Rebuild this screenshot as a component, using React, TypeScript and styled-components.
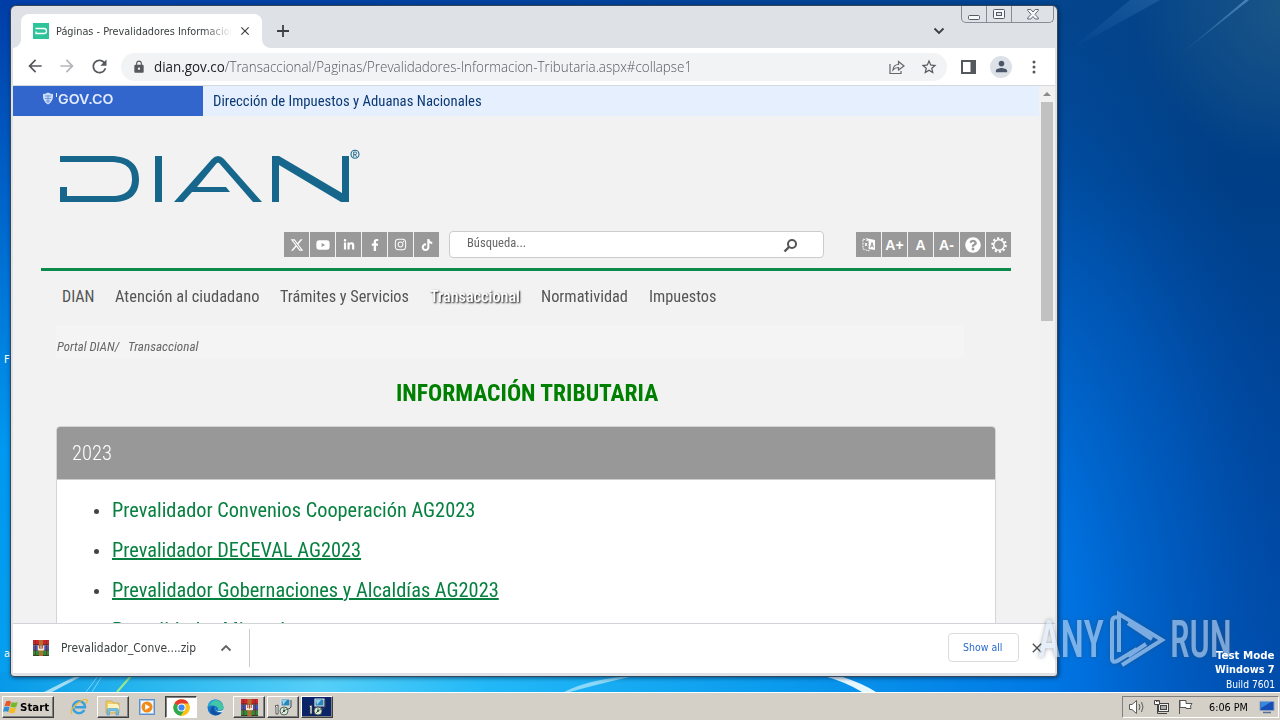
import { ReactNode, useLayoutEffect, useRef, useState } from "react";
import { FaFacebookF, FaInstagram, FaLinkedinIn, FaQuestionCircle, FaTiktok, FaYoutube } from "react-icons/fa";
import { FaXTwitter } from "react-icons/fa6";
import { MdArrowBack, MdArrowForward, MdClose, MdLock, MdPerson, MdRefresh, MdStarBorder } from "react-icons/md";
import styled, { createGlobalStyle, css } from "styled-components";

const GlobalStyle = createGlobalStyle`
  * {
    box-sizing: border-box;
  }

  body {
    margin: 0;
    width: 1280px;
    height: 720px;
    overflow: hidden;
    font-family: "DejaVu Sans Condensed", "DejaVu Sans", sans-serif;
    font-size: 11px;
  }
`;

const Desktop = styled.div`
  position: relative;
  display: flex;
  flex-direction: column;
  width: 1280px;
  height: 720px;
  overflow: hidden;
`;

const Wallpaper = styled.svg`
  position: absolute;
  inset: 0;
`;

const Stage = styled.main`
  position: relative;
  height: 692px;
  padding: 5px 0 0 10px;
`;

/* ---------- text ---------- */

const FitBox = styled.span<{ $width: number }>`
  display: block;
  flex: none;
  width: ${({ $width }) => $width}px;
  white-space: nowrap;
`;

const FitInner = styled.span`
  display: inline-block;
  transform-origin: left center;
`;

// Squeezes its text to a fixed advance width.
const Fit = ({ width, children }: { width: number; children: ReactNode }) => {
  const ref = useRef<HTMLSpanElement>(null);
  const [scale, setScale] = useState<number>(1);

  useLayoutEffect(() => {
    if (ref.current) setScale(width / ref.current.offsetWidth);
  }, [width]);

  return (
    <FitBox $width={width}>
      <FitInner ref={ref} style={{ transform: `scaleX(${scale})` }}>
        {children}
      </FitInner>
    </FitBox>
  );
};

/* ---------- browser window ---------- */

const BrowserWindow = styled.section`
  position: relative;
  display: flex;
  flex-direction: column;
  width: 1048px;
  height: 672px;
  padding: 0 2px 3px;
  background: #dee1e6;
  border: 1px solid #33475c;
  border-radius: 6px 6px 4px 4px;
  box-shadow: 1px 1px 4px rgba(0, 20, 50, 0.6);
`;

const TabStrip = styled.div`
  display: flex;
  align-items: flex-end;
  height: 42px;
`;

const Tab = styled.div`
  position: relative;
  display: flex;
  align-items: center;
  width: 241px;
  height: 34px;
  margin-left: 8px;
  padding: 0 10px 0 12px;
  background: #fff;
  border-radius: 8px 8px 0 0;
  color: #3c4043;

  &::before,
  &::after {
    content: "";
    position: absolute;
    bottom: 0;
    width: 8px;
    height: 8px;
  }

  &::before {
    left: -8px;
    background: radial-gradient(circle at 0 0, transparent 7.5px, #fff 8px);
  }

  &::after {
    right: -8px;
    background: radial-gradient(circle at 100% 0, transparent 7.5px, #fff 8px);
  }
`;

const TabTitle = styled.div`
  flex: none;
  width: 175px;
  margin: 0 7px;
  overflow: hidden;
  mask-image: linear-gradient(90deg, #000 148px, transparent 176px);
`;

const NewTab = styled.svg`
  margin: 0 0 11px 15px;
`;

const TabSearch = styled.svg`
  margin: 0 0 12px auto;
`;

const WindowControls = styled.div`
  display: flex;
  align-self: flex-start;
  width: 93px;
  height: 17px;
  margin: 0 1px 0 16px;
  border: 1px solid #868b94;
  border-top: 0;
  border-radius: 0 0 5px 5px;
`;

const ControlButton = styled.div<{ $width: number }>`
  display: grid;
  place-items: center;
  width: ${({ $width }) => $width}px;

  & + & {
    border-left: 1px solid #868b94;
  }
`;

const Toolbar = styled.div`
  display: flex;
  align-items: center;
  height: 38px;
  padding: 0 12px;
  background: #fff;
  border-bottom: 1px solid #d5d8dc;
  color: #55585c;
`;

const NavButtons = styled.div`
  display: flex;
  gap: 12px;
  width: 96px;
`;

const FadedIcon = styled.span`
  display: flex;
  color: #b4b6b9;
`;

const Omnibox = styled.div`
  display: flex;
  align-items: center;
  width: 826px;
  height: 28px;
  padding: 0 9px 0 11px;
  background: #f1f3f4;
  border-radius: 14px;
`;

const Address = styled.div`
  margin: 0 auto 0 8px;
  font-family: "Open Sans", "Noto Sans", sans-serif;
  font-size: 14px;
  font-weight: 300;
  line-height: 20px;
  color: #55595e;

  b {
    font-weight: 400;
    color: #202124;
  }
`;

const ShareIcon = styled.svg`
  margin-right: 15px;
`;

const ToolbarEnd = styled.div`
  display: flex;
  align-items: center;
  margin-left: 14px;
`;

const Avatar = styled.div`
  display: grid;
  place-items: center;
  width: 22px;
  height: 22px;
  margin: 0 20px 0 14px;
  border-radius: 50%;
  background: #dce1e7;
  color: #4c5668;
`;

/* ---------- web page ---------- */

const Viewport = styled.div`
  display: flex;
  height: 537px;
  overflow: hidden;
  font-family: "Roboto Condensed", Roboto, sans-serif;
  font-stretch: 75%;
`;

const Page = styled.div`
  width: 1026px;
  height: 537px;
  overflow: hidden;
  background: #f2f2f2;
`;

const Scrollbar = styled.div`
  display: flex;
  flex-direction: column;
  align-items: center;
  width: 16px;
  background: #f1f1f1;

  svg {
    margin: 6px 0;
  }
`;

const ScrollThumb = styled.div`
  width: 12px;
  height: 219px;
  background: #c1c1c1;
`;

const GovBar = styled.div`
  display: flex;
  height: 30px;
  background: #e6effd;
`;

const GovBrand = styled.div`
  display: flex;
  align-items: center;
  width: 190px;
  height: 30px;
  padding: 0 0 4px 29px;
  background: #3366cc;
  color: #e4edff;
  font-family: Inter, sans-serif;
  font-size: 13px;
  font-weight: 600;
  font-stretch: normal;
`;

const GovName = styled.div`
  padding-left: 10px;
  font-size: 15px;
  line-height: 30px;
  color: #0b3a75;
`;

const Logo = styled.svg`
  display: block;
  margin: 30px 0 0 44px;
`;

const Tools = styled.div`
  display: flex;
  height: 27px;
  margin: 25px 28px 0 271px;
`;

const TileRow = styled.div`
  display: flex;
  gap: 1px;
  margin-top: 1px;
`;

const Tile = styled.div`
  display: grid;
  place-items: center;
  width: 25px;
  height: 25px;
  background: #999;
  color: #fff;
  font-family: "Liberation Sans", sans-serif;
  font-size: 14px;
  font-weight: 700;
  font-stretch: normal;
`;

const SearchBox = styled.div`
  display: flex;
  justify-content: space-between;
  width: 375px;
  height: 27px;
  margin: 0 32px 0 10px;
  padding: 2px 25px 0 17px;
  background: #fff;
  border: 1px solid #ccc;
  border-radius: 4px;
  font-size: 13px;
  line-height: 17px;
  color: #666;
`;

const GreenRule = styled.div`
  height: 3px;
  margin: 10px 28px 0;
  background: #0b8a4b;
`;

const Menu = styled.nav`
  display: flex;
  gap: 21px;
  padding: 15px 0 0 49px;
  font-size: 16px;
  line-height: 22px;
`;

const MenuItem = styled.div<{ $active?: boolean }>`
  color: #555;

  ${({ $active }) =>
    $active &&
    css`
      color: #fff;
      font-weight: 500;
      text-shadow: 1px 1px 2px #000;
    `}
`;

const Breadcrumb = styled.div`
  display: flex;
  gap: 9px;
  width: 908px;
  height: 33px;
  margin: 17px 0 0 43px;
  padding: 13px 0 0 1px;
  background: #f4f4f4;
  font-size: 13px;
  font-style: italic;
  line-height: 18px;
  color: #666;
`;

const Title = styled.h1`
  margin: 19px 0 0 383px;
  font-size: 24px;
  font-weight: 700;
  line-height: 32px;
  color: #008000;
`;

const Panel = styled.div`
  width: 940px;
  height: 300px;
  margin: 17px 0 0 43px;
  background: #fff;
  border: 1px solid #d4d4d4;
  border-radius: 4px 4px 0 0;
`;

const PanelHeader = styled.div`
  height: 53px;
  padding-left: 15px;
  background: #989898;
  border-bottom: 1px solid #ccc;
  border-radius: 3px 3px 0 0;
  color: #fff;
  font-size: 20px;
  font-weight: 300;
  line-height: 52px;
`;

const FileList = styled.div`
  padding-top: 10px;
`;

const FileRow = styled.div`
  display: flex;
  align-items: center;
  height: 40px;
  padding-left: 37px;

  &::before {
    content: "";
    width: 5px;
    height: 5px;
    margin: 2px 13px 0 0;
    border-radius: 50%;
    background: #444;
  }
`;

const FileLink = styled.a<{ $underlined: boolean }>`
  color: #078040;
  font-size: 20px;
  line-height: 28px;

  ${FitInner} {
    text-decoration: ${({ $underlined }) => ($underlined ? "underline" : "none")};
    text-decoration-thickness: 2px;
    text-underline-offset: 1px;
    text-decoration-skip-ink: auto;
  }
`;

/* ---------- downloads ---------- */

const DownloadBar = styled.div`
  display: flex;
  align-items: center;
  height: 50px;
  padding-bottom: 1px;
  background: #fff;
  border-top: 1px solid #d0d3d7;
`;

const DownloadItem = styled.div`
  display: flex;
  align-items: center;
  width: 237px;
  height: 38px;
  padding-left: 20px;
  border-right: 1px solid #c8cbd0;
  color: #3c4043;
  font-size: 12px;
`;

const DownloadName = styled.div`
  margin: 0 24px 0 12px;
`;

const ShowAll = styled.div`
  display: grid;
  place-items: center;
  width: 71px;
  height: 29px;
  margin: 0 10px 1px auto;
  padding-right: 2px;
  border: 1px solid #dadce0;
  border-radius: 4px;
  color: #2a6bcf;
`;

const DownloadClose = styled.div`
  display: flex;
  margin-right: 10px;
  color: #4a4d51;
`;

/* ---------- desktop text ---------- */

const DesktopLabel = styled.div<{ $top: number }>`
  position: absolute;
  top: ${({ $top }) => $top}px;
  left: 4px;
  color: #fff;
  line-height: 14px;
`;

const Watermark = styled.div`
  position: absolute;
  top: 607px;
  left: 1038px;
  display: flex;
  align-items: center;
  gap: 4px;
  color: #d3e2f5;
  opacity: 0.58;
  font-family: "Roboto Condensed", Roboto, sans-serif;
  font-stretch: 75%;
  font-size: 52px;
  font-weight: 500;
  line-height: 66px;
  filter: drop-shadow(0 0 2px rgba(60, 70, 80, 0.8));
`;

const BuildInfo = styled.div`
  position: absolute;
  top: 649px;
  right: 5px;
  display: flex;
  flex-direction: column;
  align-items: flex-end;
  color: #fff;
  line-height: 16px;

  b {
    line-height: 14px;
  }
`;

/* ---------- taskbar ---------- */

const Taskbar = styled.footer`
  position: relative;
  display: flex;
  align-items: center;
  height: 28px;
  padding: 3px 0 2px 2px;
  background: #d4d0c8;
  border-top: 1px solid #fff;
  color: #000;
`;

const raised = css`
  border: 1px solid;
  border-color: #fff #404040 #404040 #fff;
  box-shadow: inset -1px -1px #808080;
`;

const StartButton = styled.div`
  display: flex;
  align-items: center;
  gap: 1px;
  width: 52px;
  height: 22px;
  margin-right: 9px;
  ${raised}
`;

const TaskButton = styled.div<{ $look?: "raised" | "pressed" | "selected" }>`
  display: grid;
  place-items: center;
  width: 32px;
  height: 22px;
  margin-right: 2px;

  ${({ $look }) => $look && raised}
  ${({ $look }) =>
    $look === "pressed" &&
    css`
      background: #fff;
      border-color: #404040 #fff #fff #404040;
      box-shadow: inset 1px 1px #808080;
    `}
  ${({ $look }) =>
    $look === "selected" &&
    css`
      background: #0a246a;
    `}
`;

const Tray = styled.div`
  display: flex;
  align-items: center;
  gap: 7px;
  width: 157px;
  height: 22px;
  margin: 0 1px 0 auto;
  padding-left: 5px;
  border: 1px solid;
  border-color: #808080 #fff #fff #808080;
`;

const Clock = styled.div`
  margin: 0 4px 0 8px;
`;

const Backdrop = () => (
  <Wallpaper width="1280" height="720" viewBox="0 0 1280 720">
    <defs>
      <linearGradient id="right" x1="0" y1="0" x2="0" y2="1">
        <stop offset="0" stopColor="#04448a" />
        <stop offset="0.25" stopColor="#003f86" />
        <stop offset="0.5" stopColor="#004496" />
        <stop offset="1" stopColor="#004cac" />
      </linearGradient>
      <radialGradient id="glow" cx="0" cy="0" r="1" gradientUnits="userSpaceOnUse" gradientTransform="translate(990 650) scale(320 700)">
        <stop offset="0" stopColor="#0080f4" />
        <stop offset="0.3" stopColor="#0076e6" stopOpacity="0.85" />
        <stop offset="0.65" stopColor="#0066d0" stopOpacity="0.48" />
        <stop offset="1" stopColor="#0050b0" stopOpacity="0" />
      </radialGradient>
      <linearGradient id="left" x1="0" y1="0" x2="0" y2="1">
        <stop offset="0" stopColor="#003da6" />
        <stop offset="0.3" stopColor="#0065cb" />
        <stop offset="0.65" stopColor="#0098f0" />
        <stop offset="1" stopColor="#079fee" />
      </linearGradient>
      <linearGradient id="top" x1="0" y1="0" x2="1" y2="0">
        <stop offset="0" stopColor="#0040aa" />
        <stop offset="1" stopColor="#004590" />
      </linearGradient>
      <linearGradient id="bottom" x1="0" y1="0" x2="1280" y2="0" gradientUnits="userSpaceOnUse">
        <stop offset="0" stopColor="#0799e8" />
        <stop offset="0.11" stopColor="#27b5ee" />
        <stop offset="0.25" stopColor="#55cff8" />
        <stop offset="0.38" stopColor="#22b8f7" />
        <stop offset="0.6" stopColor="#0b9cee" />
        <stop offset="0.82" stopColor="#0078e4" />
        <stop offset="1" stopColor="#004ba5" />
      </linearGradient>
      <radialGradient id="corner" cx="1285" cy="10" r="150" gradientUnits="userSpaceOnUse">
        <stop offset="0" stopColor="#1a5586" />
        <stop offset="1" stopColor="#1a5586" stopOpacity="0" />
      </radialGradient>
      <linearGradient id="ray" x1="0" y1="1" x2="1" y2="0">
        <stop offset="0" stopColor="#5d9bd0" stopOpacity="0" />
        <stop offset="1" stopColor="#5d9bd0" stopOpacity="0.7" />
      </linearGradient>
      <linearGradient id="haze" x1="0" y1="1" x2="1" y2="0">
        <stop offset="0" stopColor="#3d7dbd" stopOpacity="0" />
        <stop offset="1" stopColor="#3d7dbd" stopOpacity="0.35" />
      </linearGradient>
    </defs>
    <rect width="1280" height="720" fill="url(#right)" />
    <rect width="1280" height="720" fill="url(#glow)" />
    <rect x="1050" width="230" height="170" fill="url(#corner)" />
    <path d="M1070 50 L1130 0 H1160 Z" fill="url(#haze)" />
    <path d="M1176 58 L1245 0 H1249 Z" fill="url(#ray)" />
    <rect width="1050" height="12" fill="url(#top)" />
    <rect width="14" height="692" fill="url(#left)" />
    <rect y="672" width="1060" height="20" fill="url(#bottom)" />
    <path d="M44 692 L76 676 H82 L52 692 Z" fill="#c8ecf8" opacity="0.8" />
    <path d="M86 692 L98 676 M92 692 L102 676" stroke="#a6e2f5" strokeWidth="1" opacity="0.7" />
    <path d="M117 692 L131 676" stroke="#98e98a" strokeWidth="2" />
    <path d="M564 692 Q592 678 634 676 Q598 684 570 692 Z" fill="#8ad9f8" />
    <path d="M824 676 H840 Q864 684 876 692 H862 Q846 682 824 676 Z" fill="#e6f7ff" />
  </Wallpaper>
);

const DianFavicon = () => (
  <svg width="16" height="16" viewBox="0 0 16 16">
    <rect width="16" height="16" fill="#2fc39c" />
    <path d="M2.5 5.5H11Q13.5 5.5 13.5 8T11 10.5H3V8.5" fill="none" stroke="#fff" strokeWidth="1.3" />
  </svg>
);

const RarIcon = ({ size = 16 }: { size?: number }) => (
  <svg width={size} height={size} viewBox="0 0 16 16">
    <rect width="16" height="5" fill="#d0242f" />
    <rect y="5.3" width="16" height="5" fill="#4653b8" />
    <rect y="10.7" width="16" height="5.3" fill="#2e8a3c" />
    <path d="M0 4.8H16M0 10.4H16M0 15.6H16" stroke="#30261f" strokeWidth="0.8" />
    <path d="M2.5 0V16M13.5 0V16" stroke="#6c3420" strokeWidth="0.8" />
    <rect x="6" width="4" height="16" fill="#b0702b" />
    <rect x="4.7" y="5.5" width="6.6" height="5" fill="#f4e7cb" />
    <path d="M6.4 5V8.5M8 5V9M9.6 5V8.5" stroke="#8b2d24" strokeWidth="0.8" />
  </svg>
);

const ChromeIcon = () => (
  <svg width="17" height="17" viewBox="0 0 48 48">
    <circle cx="24" cy="24" r="23" fill="#fbc116" />
    <path d="M24 24 L4 12.5 A23 23 0 0 1 44 12.5 Z" fill="#e33b2e" />
    <path d="M24 24 L4 12.5 A23 23 0 0 0 22 47 L34 30 Z" fill="#2da94f" />
    <path d="M24 12.5H44A23 23 0 0 1 22 47L34 29Z" fill="#fbc116" />
    <circle cx="24" cy="24" r="11.5" fill="#fff" />
    <circle cx="24" cy="24" r="8.8" fill="#4285f4" />
  </svg>
);

const EdgeIcon = () => (
  <svg width="17" height="17" viewBox="0 0 17 17">
    <circle cx="8.5" cy="8.5" r="8" fill="#1676c9" />
    <path d="M0.6 8 A8 8 0 0 1 16.5 8.5 Q16 12 11 11.5 Q12 8 8 7 Q4 5 0.6 8Z" fill="#43c6a5" />
    <path d="M0.6 7.5 A8 8 0 0 1 10 0.7 Q4 2 2.5 7 Z" fill="#27a4dd" />
    <path d="M8 7 Q5 10 9 13 Q12 15 15 12.5 Q12 17 7 16 Q1 13 5 8 Z" fill="#154f9e" />
    <path d="M8.5 8 Q7.5 11 11 12 Q14 12.5 16.5 10.5 L15.5 13 Q10 14 8.5 10Z" fill="#e4eff3" />
  </svg>
);

const IeIcon = () => (
  <svg width="18" height="18" viewBox="0 0 18 18">
    <path d="M14.3 12 A6 6 0 1 1 15 9.3 H5" fill="none" stroke="#37a0df" strokeWidth="2.4" />
    <path d="M2 16 Q-1 13 6 6.5 Q14 0 17 2 Q18 3 15.5 6" fill="none" stroke="#e8b92f" strokeWidth="1.2" />
  </svg>
);

const FolderIcon = () => (
  <svg width="18" height="17" viewBox="0 0 18 17">
    <path d="M2 2H8L9.5 4H15V14H2Z" fill="#efcf6c" stroke="#c9a145" strokeWidth="0.7" />
    <path d="M4 5H13L15 7V13H4Z" fill="#fdf5bd" />
    <path d="M3 16V11Q3 9.5 4.5 9.5H13Q14.5 9.5 14.5 11V16H12V12H5.5V16Z" fill="#75bfe3" stroke="#468eb8" strokeWidth="0.5" />
  </svg>
);

const PlayerIcon = () => (
  <svg width="16" height="16" viewBox="0 0 16 16">
    <rect x="0.5" y="0.5" width="15" height="15" fill="#a2c7eb" stroke="#5b91cb" />
    <rect x="2" y="2" width="12" height="12" fill="#f4f8fb" />
    <circle cx="8" cy="8" r="5.5" fill="#f18a19" />
    <path d="M6.2 5 L11 8 L6.2 11Z" fill="#fff" />
  </svg>
);

const InstallerIcon = () => (
  <svg width="18" height="18" viewBox="0 0 18 18">
    <path d="M7 1H16V8H7Z" fill="#2885b7" stroke="#dfe2e4" strokeWidth="1.2" />
    <path d="M8 2H13L9 7Z" fill="#8fd2ec" />
    <path d="M12 9V11H15L17 9V2" fill="none" stroke="#3b4650" />
    <path d="M1 8L4 7V16H2V9Z" fill="#fff" stroke="#2c3238" strokeWidth="0.8" />
    <circle cx="10" cy="13" r="4" fill="#dcebd9" stroke="#39453e" strokeWidth="0.8" />
    <path d="M10 10V13L8 15M10 13L13 11" fill="none" stroke="#4e7b59" />
    <circle cx="10" cy="13" r="1" fill="#333" />
  </svg>
);

const WindowsFlag = () => (
  <svg width="16" height="16" viewBox="0 0 16 16">
    <path d="M3 2.5Q5.5 1 8 2.7L6.7 7.5Q4 6 1.5 7.3Z" fill="#e8562a" />
    <path d="M8.7 3Q11.5 4.5 14.7 3L13.3 8Q10.3 9.3 7.4 7.8Z" fill="#77b82a" />
    <path d="M1.3 8Q4 6.7 6.5 8.3L5.2 13Q2.5 11.5 0 12.8Z" fill="#2d8fd5" />
    <path d="M7.1 8.6Q10 10 13 8.7L11.7 13.5Q8.8 15 5.8 13.3Z" fill="#f5bb21" />
  </svg>
);

const WindowButtons = () => (
  <WindowControls>
    <ControlButton $width={24}>
      <svg width="12" height="13" viewBox="0 0 12 13">
        <rect x="0.5" y="7.5" width="11" height="4" rx="1" fill="#f7f8fa" stroke="#555b66" />
      </svg>
    </ControlButton>
    <ControlButton $width={25}>
      <svg width="12" height="11" viewBox="0 0 12 11">
        <rect x="0.5" y="0.5" width="11" height="9" rx="1" fill="#f7f8fa" stroke="#555b66" />
        <rect x="3.5" y="3.5" width="5" height="3" fill="#dee1e6" stroke="#555b66" />
      </svg>
    </ControlButton>
    <ControlButton $width={42}>
      <svg width="12" height="11" viewBox="0 0 12 11">
        <path
          d="M0.7 0.5H3.8L6 3L8.2 0.5H11.3V1.5L8 5.3L11.3 9V10H8.2L6 7.5L3.8 10H0.7V9L4 5.3L0.7 1.5Z"
          fill="#f7f8fa"
          stroke="#555b66"
          strokeWidth="0.9"
        />
      </svg>
    </ControlButton>
  </WindowControls>
);

const DianLogo = () => (
  <Logo width="306" height="60" viewBox="57 146 306 60">
    <g fill="#17678c">
      <path d="M60 156H110C131 156 139 166 139 179C139 194 131 202 112 202H60V187H67V196H112C127 196 132 189 132 179C132 168 126 162 110 162H60Z" />
      <path d="M155 156H162V202H155Z" />
      <path d="M174 202L212 159Q218 153 224 159L262 202H253L220 164Q218 161.5 216 164L197 187H226L230 192H192L183 202Z" />
      <path d="M272 156H279L342 193V156H349V202H341L279 165V202H272Z" />
    </g>
    <circle cx="355" cy="154.3" r="4" fill="none" stroke="#17678c" strokeWidth="1.1" />
    <path d="M353.7 157V152H355.2Q356.7 152 356.7 153.3T355.2 154.6H353.7M355.2 154.6L356.7 157" fill="none" stroke="#17678c" strokeWidth="0.9" />
  </Logo>
);

const GovShield = () => (
  <svg width="16" height="14" viewBox="0 0 16 14">
    <path d="M1 2Q3 2 6 0.5Q9 2 11 2Q12 9 6 12.5Q0 9 1 2Z" fill="#cbdcfb" />
    <path d="M3 4H9M3 6.5H9M4 9H8M6 3V11" stroke="#5c86d8" strokeWidth="0.8" />
    <path d="M14.5 1V5" stroke="#e4edff" strokeWidth="1" />
  </svg>
);

const SignIcon = () => (
  <svg width="14" height="15" viewBox="0 0 14 15">
    <path d="M1 2L7 4V14L1 12Z" fill="none" stroke="#fff" strokeDasharray="2 1" />
    <path d="M3 1L13 3V13L7 12V4Z" fill="#fff" />
    <path d="M8.5 10.5L10 5.5L11.5 10.5M9 9H11" fill="none" stroke="#999" />
    <path d="M3 6L5 9M5 6L3 9" stroke="#fff" />
  </svg>
);

const GearIcon = () => (
  <svg width="18" height="18" viewBox="0 0 18 18">
    <circle cx="9" cy="9" r="6.8" fill="none" stroke="#fff" strokeWidth="2" strokeDasharray="2.2 2.07" />
    <circle cx="9" cy="9" r="5.3" fill="none" stroke="#fff" strokeWidth="1.5" />
  </svg>
);

const menu = [
  { label: "DIAN", width: 32 },
  { label: "Atención al ciudadano", width: 144 },
  { label: "Trámites y Servicios", width: 129 },
  { label: "Transaccional", width: 90, active: true },
  { label: "Normatividad", width: 87 },
  { label: "Impuestos", width: 67 },
];

const files = [
  { label: "Prevalidador Convenios Cooperación AG2023", width: 363, underlined: false },
  { label: "Prevalidador DECEVAL AG2023", width: 249, underlined: true },
  { label: "Prevalidador Gobernaciones y Alcaldías AG2023", width: 387, underlined: true },
  { label: "Prevalidador Mineral", width: 173, underlined: true },
];

const BrowserHeader = () => (
  <>
    <TabStrip>
      <Tab>
        <DianFavicon />
        <TabTitle>
          <Fit width={180}>Páginas - Prevalidadores Informacion</Fit>
        </TabTitle>
        <MdClose size={14} />
      </Tab>
      <NewTab width="12" height="12" viewBox="0 0 12 12">
        <path d="M6 0V12M0 6H12" stroke="#3c4043" strokeWidth="1.8" />
      </NewTab>
      <TabSearch width="12" height="10" viewBox="0 0 12 10">
        <path d="M1.5 2.5L6 7L10.5 2.5" fill="none" stroke="#3c4043" strokeWidth="1.9" />
      </TabSearch>
      <WindowButtons />
    </TabStrip>
    <Toolbar>
      <NavButtons>
        <MdArrowBack size={20} />
        <FadedIcon>
          <MdArrowForward size={20} />
        </FadedIcon>
        <MdRefresh size={21} />
      </NavButtons>
      <Omnibox>
        <MdLock size={14} />
        <Address>
          <Fit width={538}>
            <b>dian.gov.co</b>/Transaccional/Paginas/Prevalidadores-Informacion-Tributaria.aspx#collapse1
          </Fit>
        </Address>
        <ShareIcon width="16" height="16" viewBox="0 0 16 16" fill="none" stroke="#63666a" strokeWidth="1.2">
          <path d="M1 5V14.5H12V12M4 11Q4.5 5.5 9.5 5.5V2.5L15 7L9.5 11V8.5Q6 8.5 4 11Z" />
        </ShareIcon>
        <MdStarBorder size={18} />
      </Omnibox>
      <ToolbarEnd>
        <svg width="15" height="14" viewBox="0 0 15 14">
          <path d="M0 0H15V14H0ZM2 2V12H9.5V2Z" fill="#55585c" fillRule="evenodd" />
        </svg>
        <Avatar>
          <MdPerson size={17} />
        </Avatar>
        <svg width="4" height="14" viewBox="0 0 4 14" fill="#55585c">
          <circle cx="2" cy="2" r="1.5" />
          <circle cx="2" cy="7" r="1.5" />
          <circle cx="2" cy="12" r="1.5" />
        </svg>
      </ToolbarEnd>
    </Toolbar>
  </>
);

const WebPage = () => (
  <Viewport>
    <Page>
      <GovBar>
        <GovBrand>
          <GovShield />
          <Fit width={56}>GOV.CO</Fit>
        </GovBrand>
        <GovName>
          <Fit width={269}>Dirección de Impuestos y Aduanas Nacionales</Fit>
        </GovName>
      </GovBar>
      <DianLogo />
      <Tools>
        <TileRow>
          <Tile>
            <FaXTwitter size={14} />
          </Tile>
          <Tile>
            <FaYoutube size={14} />
          </Tile>
          <Tile>
            <FaLinkedinIn size={12} />
          </Tile>
          <Tile>
            <FaFacebookF size={12} />
          </Tile>
          <Tile>
            <FaInstagram size={13} />
          </Tile>
          <Tile>
            <FaTiktok size={12} />
          </Tile>
        </TileRow>
        <SearchBox>
          <Fit width={59}>Búsqueda...</Fit>
          <svg width="15" height="22" viewBox="0 0 15 22">
            <circle cx="9" cy="10" r="4" fill="none" stroke="#555" strokeWidth="2" />
            <path d="M6 13L1.5 17.5" stroke="#555" strokeWidth="2.4" />
          </svg>
        </SearchBox>
        <TileRow>
          <Tile>
            <SignIcon />
          </Tile>
          <Tile>A+</Tile>
          <Tile>A</Tile>
          <Tile>A-</Tile>
          <Tile>
            <FaQuestionCircle size={16} />
          </Tile>
          <Tile>
            <GearIcon />
          </Tile>
        </TileRow>
      </Tools>
      <GreenRule />
      <Menu>
        {menu.map(({ label, width, active }) => (
          <MenuItem key={label} $active={active}>
            <Fit width={width}>{label}</Fit>
          </MenuItem>
        ))}
      </Menu>
      <Breadcrumb>
        <Fit width={62}>Portal DIAN/</Fit>
        <Fit width={71}>Transaccional</Fit>
      </Breadcrumb>
      <Title>
        <Fit width={262}>INFORMACIÓN TRIBUTARIA</Fit>
      </Title>
      <Panel>
        <PanelHeader>
          <Fit width={40}>2023</Fit>
        </PanelHeader>
        <FileList>
          {files.map(({ label, width, underlined }) => (
            <FileRow key={label}>
              <FileLink $underlined={underlined}>
                <Fit width={width}>{label}</Fit>
              </FileLink>
            </FileRow>
          ))}
        </FileList>
      </Panel>
    </Page>
    <Scrollbar>
      <svg width="8" height="4" viewBox="0 0 8 4">
        <path d="M0 4L4 0L8 4Z" fill="#8b8b8b" />
      </svg>
      <ScrollThumb />
    </Scrollbar>
  </Viewport>
);

const App: React.FC = () => {
  return (
    <>
      <GlobalStyle />
      <Desktop>
        <Backdrop />
        <Stage>
          <DesktopLabel $top={353}>F</DesktopLabel>
          <DesktopLabel $top={647}>a</DesktopLabel>
          <BrowserWindow>
            <BrowserHeader />
            <WebPage />
            <DownloadBar>
              <DownloadItem>
                <RarIcon />
                <DownloadName>
                  <Fit width={135}>Prevalidador_Conve....zip</Fit>
                </DownloadName>
                <svg width="12" height="8" viewBox="0 0 12 8">
                  <path d="M1.5 6.5L6 2L10.5 6.5" fill="none" stroke="#5f6368" strokeWidth="1.8" />
                </svg>
              </DownloadItem>
              <ShowAll>
                <Fit width={39}>Show all</Fit>
              </ShowAll>
              <DownloadClose>
                <MdClose size={16} />
              </DownloadClose>
            </DownloadBar>
          </BrowserWindow>
          <Watermark>
            <Fit width={66}>ANY</Fit>
            <svg width="58" height="62" viewBox="0 0 58 62" fill="none" stroke="#d3e2f5" strokeWidth="4">
              <path d="M11 43V5L54 31L14 56M20 14L44 30M20 47L38 35M11 9Q4 6 4 14V50Q5 55 11 51L29 40" />
            </svg>
            <Fit width={62}>RUN</Fit>
          </Watermark>
          <BuildInfo>
            <b>
              <Fit width={59}>Test Mode</Fit>
            </b>
            <b>
              <Fit width={60}>Windows 7</Fit>
            </b>
            <Fit width={49}>Build 7601</Fit>
          </BuildInfo>
        </Stage>
        <Taskbar>
          <StartButton>
            <WindowsFlag />
            <b>
              <Fit width={29}>Start</Fit>
            </b>
          </StartButton>
          <TaskButton>
            <IeIcon />
          </TaskButton>
          <TaskButton $look="raised">
            <FolderIcon />
          </TaskButton>
          <TaskButton>
            <PlayerIcon />
          </TaskButton>
          <TaskButton $look="pressed">
            <ChromeIcon />
          </TaskButton>
          <TaskButton>
            <EdgeIcon />
          </TaskButton>
          <TaskButton $look="raised">
            <RarIcon size={17} />
          </TaskButton>
          <TaskButton $look="raised">
            <InstallerIcon />
          </TaskButton>
          <TaskButton $look="selected">
            <InstallerIcon />
          </TaskButton>
          <Tray>
            <svg width="18" height="16" viewBox="0 0 18 16" fill="none" stroke="#5d5d5d">
              <path d="M1.5 5.5H4L8.5 1.5V14.5L4 10.5H1.5Z" fill="#fff" />
              <path d="M11 5Q13 8 11 11M13.5 3Q16.5 8 13.5 13" />
            </svg>
            <svg width="17" height="16" viewBox="0 0 17 16" fill="none" stroke="#444">
              <path d="M4.5 5V14.5H14" />
              <rect x="5.5" y="4.5" width="10" height="8" fill="#eee" />
              <rect x="7.5" y="6.5" width="6" height="4" fill="#aaa" />
              <path d="M1.5 1.5H6.5V5.5H1.5ZM3.5 1V3M5 1V3" fill="#fff" />
            </svg>
            <svg width="17" height="16" viewBox="0 0 17 16" fill="none" stroke="#555">
              <path d="M2.5 1V15M3 1.5H9V4.5H15L13.5 7L14 9.5H9V8.5H3Z" fill="#fff" />
            </svg>
            <Clock>
              <Fit width={39}>6:06 PM</Fit>
            </Clock>
            <svg width="16" height="15" viewBox="0 0 16 15">
              <path d="M1 1.5H15V10.5H1Z" fill="#174db5" stroke="#89a2c6" />
              <path d="M2 2H12L2 8Z" fill="#3888df" />
              <path d="M4 12.5H12" stroke="#59708e" strokeWidth="1.5" />
            </svg>
          </Tray>
        </Taskbar>
      </Desktop>
    </>
  );
};

export default App;
